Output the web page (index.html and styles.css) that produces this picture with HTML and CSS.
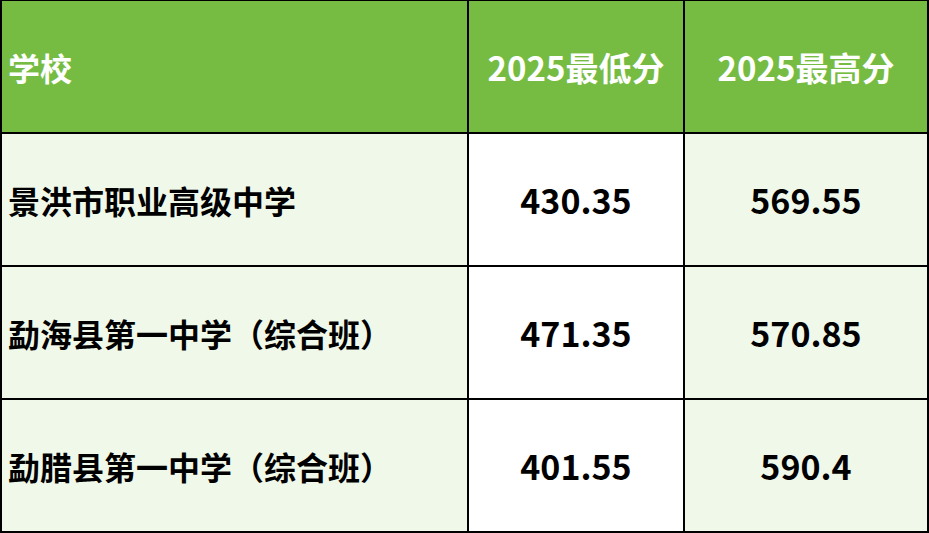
FILE: index.html
```html
<!DOCTYPE html>
<html lang="zh">
<head>
<meta charset="utf-8">
<link rel="stylesheet" href="styles.css">
</head>
<body>
<div class="table">
  <div class="cell head name">学校</div>
  <div class="cell head num">2025最低分</div>
  <div class="cell head num">2025最高分</div>

  <div class="cell name tint">景洪市职业高级中学</div>
  <div class="cell num">430.35</div>
  <div class="cell num tint">569.55</div>

  <div class="cell name tint">勐海县第一中学（综合班）</div>
  <div class="cell num">471.35</div>
  <div class="cell num tint">570.85</div>

  <div class="cell name tint">勐腊县第一中学（综合班）</div>
  <div class="cell num">401.55</div>
  <div class="cell num tint">590.4</div>
</div>
</body>
</html>
```
FILE: styles.css
```css
html, body {
  margin: 0;
  padding: 0;
  background: #ffffff;
}
.table {
  width: 929px;
  height: 533px;
  box-sizing: border-box;
  display: grid;
  grid-template-columns: 465px 214px 242px;
  grid-template-rows: 131px 131px 131px 131px;
  gap: 2px;
  padding: 1px 2px 2px 2px;
  background: #000000;
  font-family: "Noto Sans CJK SC", "Noto Sans", sans-serif;
  font-weight: 700;
  font-size: 32px;
  color: #000000;
}
.cell {
  display: flex;
  align-items: center;
  background: #ffffff;
}
.cell.tint {
  background: #f0f8ea;
}
.cell.head {
  background: #76bc43;
  color: #ffffff;
}
.name {
  padding-left: 6px;
}
.num {
  justify-content: center;
  font-size: 34px;
}
.head.num {
  font-size: 33px;
}
```
